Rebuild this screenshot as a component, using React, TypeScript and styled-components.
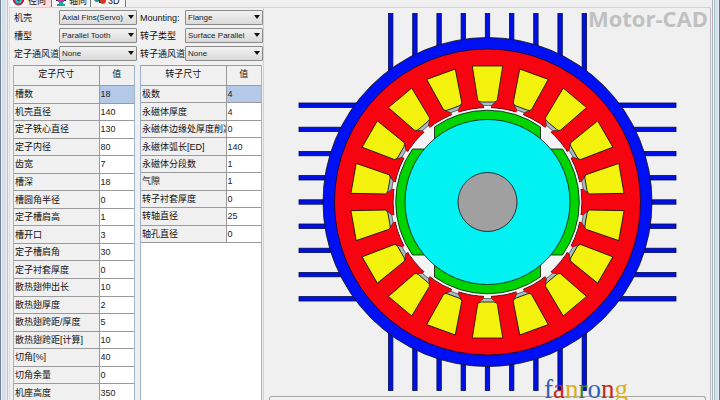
import React from 'react';
import styled, { createGlobalStyle } from 'styled-components';

const GlobalStyle = createGlobalStyle`
  *, *::before, *::after { box-sizing: border-box; }
  body {
    margin: 0;
    overflow: hidden;
    background: #f0f0f0;
    color: #111;
    font: 9px/12px "Liberation Sans", "Noto Sans CJK SC", sans-serif;
  }
`;

const Frame = styled.div`
  display: flex;
  height: 100vh;
  overflow: hidden;
  border-left: 1px solid #75828f;
  border-right: 1px solid #66727e;
`;

const Edge = styled.div<{ $side: 'left' | 'right' }>`
  flex: none;
  width: 5px;
  background: #d3e0ee;
  border-${(p) => p.$side}: 1px solid #e4ecf6;
  ${(p) => p.$side === 'right' && 'border-left: 1px solid #a9c4cc;'}
`;

const Content = styled.main`
  display: flex;
  flex-direction: column;
  flex: 1;
  min-width: 0;
  margin: 0 1px;
  padding: 0 1px;
  border-left: 1px solid #c3c3c3;
  border-right: 1px solid #b4aeb4;
`;

const TabBar = styled.nav`
  display: flex;
  flex: none;
  align-items: flex-end;
  height: 8px;
  padding-left: 1px;
  border-bottom: 1px solid #d4d4d4;
`;

const Tab = styled.button<{ $active?: boolean }>`
  display: flex;
  flex: none;
  align-items: center;
  gap: 2px;
  min-width: 35px;
  height: 12px;
  padding: 0 3px;
  border: 0;
  border-right: 1px solid #777;
  background: ${(p) => (p.$active ? 'linear-gradient(90deg, #fff, #ffd8d8)' : '#f6f6f6')};
  color: #111;
  font: inherit;
  line-height: 12px;
  white-space: nowrap;

  &:first-child { min-width: 42px; gap: 4px; }

  svg { display: block; flex: none; }
`;

const Workspace = styled.div`
  display: flex;
  flex: 1;
  min-height: 0;
  border-left: 1px solid #dcdcdc;
`;

const Editor = styled.section`
  display: flex;
  flex-direction: column;
  flex: none;
  padding: 2px 0 0 3px;
`;

const Options = styled.form`
  display: grid;
  grid-template-columns: 46px 78px 48px 78px;
  row-gap: 3px;
  align-items: center;
`;

const OptionLabel = styled.label<{ $inset: boolean }>`
  padding-left: ${(p) => (p.$inset ? 3 : 1)}px;
  white-space: nowrap;
`;

const SelectBox = styled.span`
  display: flex;
  position: relative;

  svg { position: absolute; right: 3px; top: 5px; pointer-events: none; }
`;

const Select = styled.select`
  appearance: none;
  width: 100%;
  height: 15px;
  padding: 0 8px 0 2px;
  border: 1px solid #8a8a8a;
  border-radius: 1px;
  background: linear-gradient(#f2f2f2, #dadada);
  color: #1c1c1c;
  font: inherit;
  font-size: 8px;
`;

const Tables = styled.div`
  display: flex;
  flex: 1;
  align-items: stretch;
  gap: 5px;
  padding-top: 4px;
`;

const TablePane = styled.div`
  flex: none;
  width: 122px;
  background: #fff;
  border: solid #9fb4cc;
  border-width: 0 1px;
`;

const Table = styled.table<{ $rows: number }>`
  width: 100%;
  height: ${(p) => Math.round(p.$rows * 17.6) + 20}px;
  table-layout: fixed;
  border-collapse: collapse;
  background: #f0f0f0;

  th, td { border: 1px solid #9a9a9a; overflow: hidden; white-space: nowrap; }
  th:first-child { border-left: 0; }
  th:last-child, td:last-child { border-right: 0; }
`;

const HeadCell = styled.th<{ $wide?: boolean }>`
  width: ${(p) => (p.$wide ? '85px' : 'auto')};
  height: 20px;
  padding: 0 0 3px;
  font-weight: 400;
`;

const NameCell = styled.th`
  padding: 0 0 0 1px;
  font-weight: 400;
  text-align: left;
`;

const ValueCell = styled.td<{ $selected?: boolean }>`
  padding: 0 0 0 1px;
  background: ${(p) => (p.$selected ? '#b4c9ea' : '#fff')};
  color: #222;
`;

const Preview = styled.section`
  display: flex;
  flex-direction: column;
  position: relative;
  flex: 1;
  min-width: 0;
  border-left: 1px solid #c6d4e2;
  border-right: 1px solid #b8bcc0;
`;

const Drawing = styled.svg`
  display: block;
  flex: 1;
  width: 100%;
  min-height: 0;
`;

const Brand = styled.span`
  position: absolute;
  top: 0;
  right: 2px;
  color: #c0c0c0;
  font: 700 22px/20px "Open Sans", sans-serif;
`;

const LowerGroup = styled.div`
  flex: none;
  height: 4px;
  margin: 0 4px 0 5px;
  border: solid #a8a8a8;
  border-width: 1px 1px 0;
  border-radius: 3px 3px 0 0;
`;

const Watermark = styled.span`
  position: absolute;
  right: 82px;
  bottom: -4px;
  font: 27px/30px "Liberation Serif", serif;
`;

const Letter = styled.span<{ $color: string }>`
  color: ${(p) => p.$color};
`;

const stator = [
  ['槽数', '18'], ['机壳直径', '140'], ['定子铁心直径', '130'], ['定子内径', '80'],
  ['齿宽', '7'], ['槽深', '18'], ['槽圆角半径', '0'], ['定子槽肩高', '1'],
  ['槽开口', '3'], ['定子槽肩角', '30'], ['定子衬套厚度', '0'], ['散热翅伸出长', '10'],
  ['散热翅厚度', '2'], ['散热翅跨距/厚度', '5'], ['散热翅跨距[计算]', '10'],
  ['切角[%]', '40'], ['切角余量', '0'], ['机座高度', '350'],
];

const rotor = [
  ['极数', '4'], ['永磁体厚度', '4'], ['永磁体边缘处厚度削减', '0'], ['永磁体弧长[ED]', '140'],
  ['永磁体分段数', '1'], ['气隙', '1'], ['转子衬套厚度', '0'], ['转轴直径', '25'], ['轴孔直径', '0'],
];

const options = [
  ['housing', '机壳', 'Axial Fins(Servo)'],
  ['mounting', 'Mounting:', 'Flange'],
  ['slot', '槽型', 'Parallel Tooth'],
  ['rotor', '转子类型', 'Surface Parallel'],
  ['statorDuct', '定子通风道', 'None'],
  ['rotorDuct', '转子通风道', 'None'],
];

const letters = [
  ['f', '#2f62b8'], ['a', '#c8281c'], ['n', '#dcae1c'], ['r', '#2f8a3c'],
  ['o', '#2f62b8'], ['n', '#c8281c'], ['g', '#dcae1c'],
];

const DownArrow = () => (
  <svg width="6" height="4" viewBox="0 0 6 4" aria-hidden="true"><path d="M0 0h6L3 4z" fill="#111" /></svg>
);

const RadialIcon = () => (
  <svg width="11" height="12" viewBox="0 0 11 12" aria-hidden="true">
    <circle cx="5.500" cy="5" r="5" fill="#e0205c" stroke="#7a1838" />
    <circle cx="5.500" cy="5" r="3.200" fill="#18c8c8" />
    <circle cx="5.500" cy="5" r="1.200" fill="#333" />
  </svg>
);

const AxialIcon = () => (
  <svg width="12" height="12" viewBox="0 0 12 12" aria-hidden="true">
    <path d="M1 1h10v5H1z" fill="#2a2a48" />
    <path d="M3 5h6v2H3z" fill="#d030a0" />
    <path d="M4 7h4v2h2v2H2V9h2z" fill="#18a8a0" />
  </svg>
);

const SolidIcon = () => (
  <svg width="12" height="12" viewBox="0 0 12 12" aria-hidden="true">
    <circle cx="3" cy="4" r="3" fill="#208c98" />
    <path d="M5 2h2v6H5z" fill="#333" />
    <ellipse cx="9" cy="5" rx="3" ry="4" fill="#d83a20" />
  </svg>
);

function DimensionTable({ title, rows }: { title: string; rows: string[][] }) {
  return (
    <TablePane>
      <Table $rows={rows.length}>
        <thead>
          <tr><HeadCell $wide scope="col">{title}</HeadCell><HeadCell scope="col">值</HeadCell></tr>
        </thead>
        <tbody>
          {rows.map(([name, value], i) => (
            <tr key={name}>
              <NameCell scope="row">{name}</NameCell>
              <ValueCell $selected={i === 0}>{value}</ValueCell>
            </tr>
          ))}
        </tbody>
      </Table>
    </TablePane>
  );
}

function MotorSection() {
  const fins = [-4, -3, -2, -1, 0, 1, 2, 3, 4].map((n) => n * 24.2);
  const slots = Array.from({ length: 18 }, (_, i) => i * 20);
  return (
    <Drawing viewBox="-223 -194 445 388" role="img" aria-label="Motor cross-section">
      <g fill="#0010e4" stroke="#000c50" strokeWidth="0.800">
        {fins.map((p) => <rect key={`v${p}`} x={p - 2.2} y="-188.500" width="4.400" height="377" />)}
        {fins.map((p) => <rect key={`h${p}`} x="-188.500" y={p - 2.2} width="377" height="4.400" />)}
      </g>
      <g stroke="#101010" strokeWidth="0.800">
        <circle r="164.500" fill="#0010f4" />
        <circle r="153" fill="#f60410" />
        <circle r="94.300" fill="#f4f4f4" />
        {slots.map((a) => (
          <g key={a} transform={`rotate(${a})`}>
            <path d="M-3.500-93V-97H3.500V-93z" fill="#f4f4f4" stroke="none" />
            <path d="M-8.500-100.500L-4-96.500H4L8.500-100.500z" fill="#a9bcc0" strokeWidth="0.500" />
            <path d="M-15.200-136H15.200L9.800-102Q9-100 6-100H-6Q-9-100-9.800-102z" fill="#f2f20c" />
          </g>
        ))}
        <circle r="93.700" fill="#f4f4f4" stroke="none" />
        {[0, 90, 180, 270].map((a) => (
          <path key={a} transform={`rotate(${a})`} d="M-53-75A92 92 0 0 1 53-75V-63H-53z" fill="#00d400" />
        ))}
        <circle r="82.500" fill="#00f2f2" />
        <circle r="29.500" fill="#a0a0a0" />
      </g>
    </Drawing>
  );
}

export default function App() {
  return (
    <Frame>
      <GlobalStyle />
      <Edge $side="left" />
      <Content>
        <TabBar>
          <Tab $active><RadialIcon />径向</Tab>
          <Tab><AxialIcon />轴向</Tab>
          <Tab><SolidIcon />3D</Tab>
        </TabBar>
        <Workspace>
          <Editor>
            <Options>
              {options.map(([id, label, value], i) => (
                <React.Fragment key={id}>
                  <OptionLabel htmlFor={id} $inset={i % 2 === 1}>{label}</OptionLabel>
                  <SelectBox>
                    <Select id={id}><option>{value}</option></Select>
                    <DownArrow />
                  </SelectBox>
                </React.Fragment>
              ))}
            </Options>
            <Tables>
              <DimensionTable title="定子尺寸" rows={stator} />
              <DimensionTable title="转子尺寸" rows={rotor} />
            </Tables>
          </Editor>
          <Preview>
            <MotorSection />
            <Brand>Motor-CAD</Brand>
            <LowerGroup />
            <Watermark>
              {letters.map(([letter, color], i) => <Letter key={i} $color={color}>{letter}</Letter>)}
            </Watermark>
          </Preview>
        </Workspace>
      </Content>
      <Edge $side="right" />
    </Frame>
  );
}
